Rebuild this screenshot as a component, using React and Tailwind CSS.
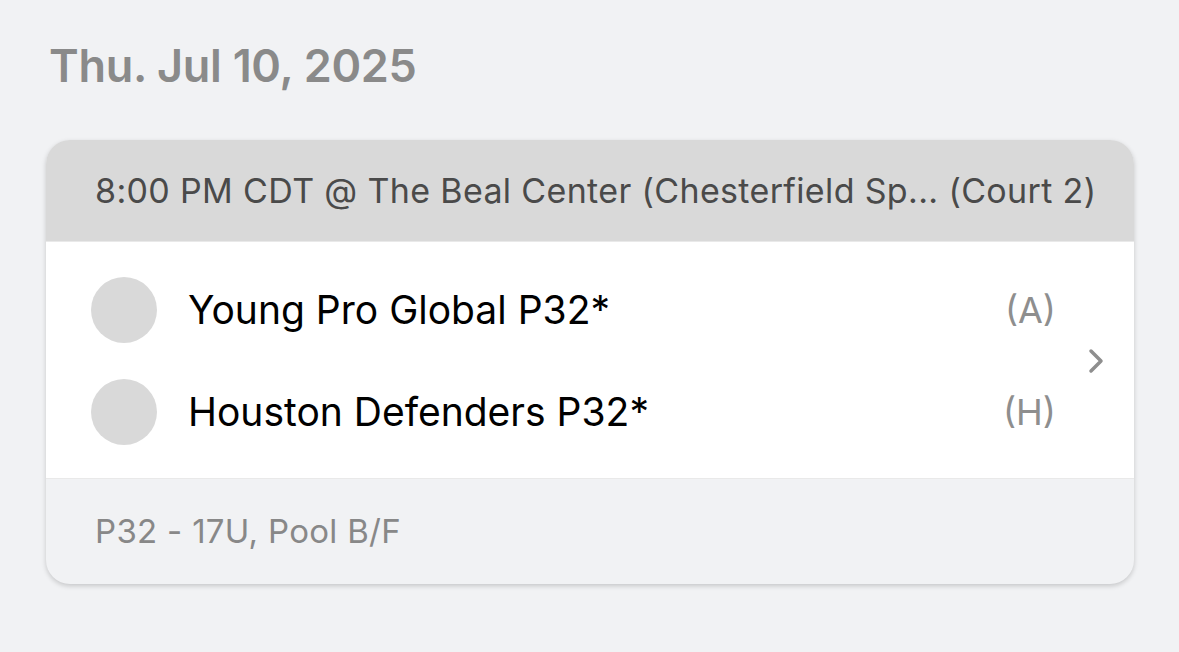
import React from "react";

const teams = [
    { name: "Young Pro Global P32*", side: "(A)" },
    { name: "Houston Defenders P32*", side: "(H)" },
];

export default function App() {
    return (
        <div className="min-h-screen bg-[#f1f2f4] pl-[46px] pr-[45px] pt-[38px]" style={{ fontFamily: "Inter, 'Noto Sans', sans-serif" }}>
            <h1 className="pl-[3px] text-[45px] leading-[56px] font-semibold text-[#8a8a8a] tracking-[-0.3px]">Thu. Jul 10, 2025</h1>

            <div className="mt-[46px] rounded-[24px] bg-[#f1f2f4] shadow-[0_2px_5px_rgba(0,0,0,0.18)] overflow-hidden">
                <div className="h-[102px] flex items-center px-[49px] bg-[#d9d9d9] border-b border-[#e9e9e9]">
                    <span className="text-[34px] tracking-[0.35px] text-[#4a4a4a] whitespace-nowrap">8:00 PM CDT @ The Beal Center (Chesterfield Sp... (Court 2)</span>
                </div>

                <div className="flex items-center bg-white pl-[45px] pr-[28px] pt-[35px] pb-[33px]">
                    <div className="flex-1 flex flex-col gap-[36px]">
                        {teams.map((t) => (
                            <div key={t.side} className="flex items-center">
                                <div className="w-[66px] h-[66px] rounded-full bg-[#d9d9d9]" />
                                <span className="flex-1 ml-[31px] text-[39px] text-black">{t.name}</span>
                                <span className="text-[36px] text-[#8e8e8e]">{t.side}</span>
                            </div>
                        ))}
                    </div>
                    <svg className="ml-[30px] w-[20px] h-[30px]" viewBox="0 0 20 30" fill="none">
                        <path d="M5 5 L15 15 L5 25" stroke="#8e8e8e" strokeWidth="3.5" strokeLinecap="round" strokeLinejoin="round" />
                    </svg>
                </div>

                <div className="h-[106px] flex items-center px-[49px] border-t border-[#e9e9e9]">
                    <span className="text-[33px] tracking-[0.3px] text-[#888888]">P32 - 17U, Pool B/F</span>
                </div>
            </div>
        </div>
    );
}
